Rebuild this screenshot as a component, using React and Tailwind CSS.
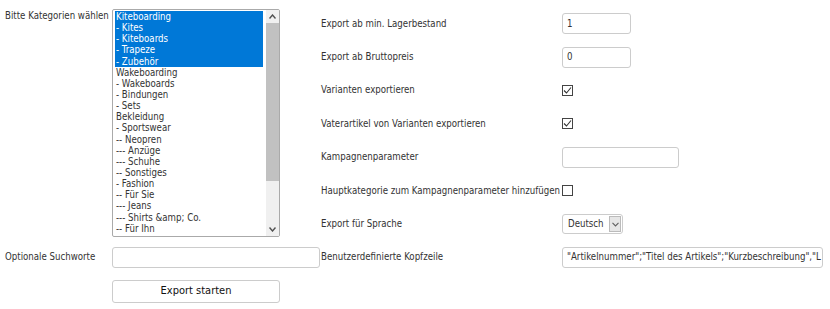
import { useState } from 'react'

const CATEGORIES = [
  { name: 'Kiteboarding', selected: true },
  { name: '- Kites', selected: true },
  { name: '- Kiteboards', selected: true },
  { name: '- Trapeze', selected: true },
  { name: '- Zubehör', selected: true },
  { name: 'Wakeboarding' },
  { name: '- Wakeboards' },
  { name: '- Bindungen' },
  { name: '- Sets' },
  { name: 'Bekleidung' },
  { name: '- Sportswear' },
  { name: '-- Neopren' },
  { name: '--- Anzüge' },
  { name: '--- Schuhe' },
  { name: '-- Sonstiges' },
  { name: '- Fashion' },
  { name: '-- Für Sie' },
  { name: '--- Jeans' },
  { name: '--- Shirts &amp; Co.' },
  { name: '-- Für Ihn' },
]

function Checkbox({ checked }) {
  return (
    <span className="flex h-[11px] w-[11px] items-center justify-center border border-[#444] bg-white">
      {checked && (
        <svg width="9" height="9" viewBox="0 0 9 9" fill="none">
          <path d="M1 4.5 L3.5 7 L8 1.5" stroke="#333" strokeWidth="1.1" />
        </svg>
      )}
    </span>
  )
}

function TextInput({ value, className }) {
  return (
    <div
      className={`flex items-center overflow-hidden whitespace-nowrap rounded-[3px] border border-[#ccc] bg-white px-[4px] text-[#333] ${className}`}
    >
      {value}
    </div>
  )
}

function CategoryList() {
  return (
    <div className="flex h-[228px] w-[168px] overflow-hidden rounded-[2px] border border-[#aaa] bg-white">
      <div className="flex-1 pt-[1px] pl-[2px]">
        {CATEGORIES.map((c) => (
          <div
            key={c.name}
            className={`h-[11.15px] pl-[1px] leading-[11.15px] whitespace-nowrap ${
              c.selected ? 'bg-[#0078d7] text-white' : 'text-[#333]'
            }`}
          >
            {c.name}
          </div>
        ))}
      </div>
      <div className="ml-[3px] flex w-[13px] flex-col bg-[#f0f0f0]">
        <div className="flex h-[13px] items-center justify-center">
          <svg width="7" height="5" viewBox="0 0 7 5">
            <path d="M0.5 4.5 L3.5 1 L6.5 4.5" fill="none" stroke="#505050" strokeWidth="1.4" />
          </svg>
        </div>
        <div className="h-[158px] bg-[#c1c1c1]" />
        <div className="flex-1" />
        <div className="flex h-[13px] items-center justify-center">
          <svg width="7" height="5" viewBox="0 0 7 5">
            <path d="M0.5 0.5 L3.5 4 L6.5 0.5" fill="none" stroke="#505050" strokeWidth="1.4" />
          </svg>
        </div>
      </div>
    </div>
  )
}

function Row({ label, children }) {
  return (
    <div className="flex h-[33.43px] items-center">
      <div className="w-[241px] whitespace-nowrap">{label}</div>
      {children}
    </div>
  )
}

export default function App() {
  const [lang] = useState('Deutsch')

  return (
    <div className="flex h-[309px] w-[830px] bg-white font-['DejaVu_Sans_Condensed',Tahoma,sans-serif] text-[9.6px] text-[#333]">
      <div className="flex w-[321px] flex-col pt-[9px] pl-[5px]">
        <div className="flex">
          <div className="w-[107px] pt-[1px] leading-[12px] whitespace-nowrap">Bitte Kategorien wählen</div>
          <CategoryList />
        </div>
        <div className="mt-[10px] flex items-center">
          <div className="w-[107px]">Optionale Suchworte</div>
          <TextInput value="" className="h-[21px] w-[208px]" />
        </div>
        <div className="mt-[12px] flex">
          <div className="w-[107px]" />
          <button className="h-[23px] w-[168px] rounded-[3px] border border-[#ccc] bg-white text-[11px] text-[#111]">
            Export starten
          </button>
        </div>
      </div>

      <div className="flex flex-col pt-[7px]">
        <Row label="Export ab min. Lagerbestand">
          <TextInput value="1" className="h-[21px] w-[69px]" />
        </Row>
        <Row label="Export ab Bruttopreis">
          <TextInput value="0" className="h-[21px] w-[69px]" />
        </Row>
        <Row label="Varianten exportieren">
          <Checkbox checked />
        </Row>
        <Row label="Vaterartikel von Varianten exportieren">
          <Checkbox checked />
        </Row>
        <Row label="Kampagnenparameter">
          <TextInput value="" className="h-[21px] w-[117px]" />
        </Row>
        <Row label="Hauptkategorie zum Kampagnenparameter hinzufügen">
          <Checkbox />
        </Row>
        <Row label="Export für Sprache">
          <div className="flex h-[20px] w-[61px] items-center rounded-[3px] border border-[#ccc] bg-white">
            <span className="flex-1 pl-[5px]">{lang}</span>
            <span className="mr-[1px] flex h-[16px] w-[12px] items-center justify-center border border-[#bbb] bg-[#e6e6e6]">
              <svg width="7" height="5" viewBox="0 0 7 5">
                <path d="M0.5 0.8 L3.5 4 L6.5 0.8" fill="none" stroke="#606060" strokeWidth="1.1" />
              </svg>
            </span>
          </div>
        </Row>
        <Row label="Benutzerdefinierte Kopfzeile">
          <TextInput
            value={'"Artikelnummer";"Titel des Artikels";"Kurzbeschreibung","L'}
            className="h-[21px] w-[261px]"
          />
        </Row>
      </div>
    </div>
  )
}
